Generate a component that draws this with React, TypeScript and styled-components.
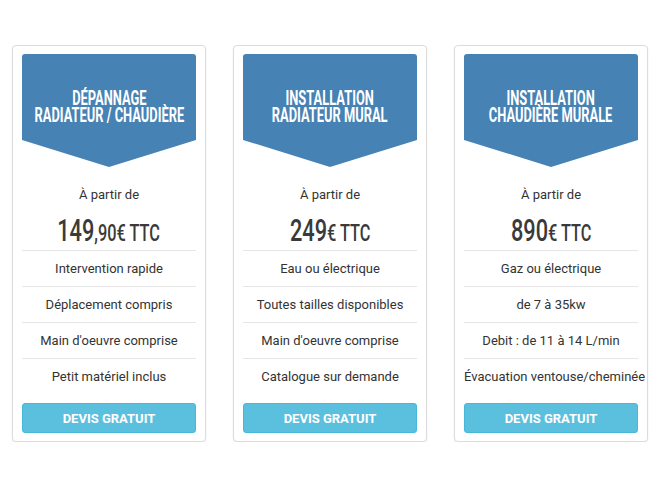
import React from "react";
import styled, { createGlobalStyle } from "styled-components";

const Global = createGlobalStyle`
  html, body { margin: 0; padding: 0; background: #fff; }
  body { font-family: Roboto, "Liberation Sans", Arial, sans-serif; }
`;

const Row = styled.div`
  display: flex;
  gap: 27px;
  padding: 45px 11px 0 12px;
  align-items: flex-start;
`;

const Card = styled.div`
  width: 194px;
  box-sizing: border-box;
  border: 1px solid #dcdcdc;
  border-radius: 4px;
  box-shadow: 0 1px 2px rgba(0, 0, 0, 0.08);
  padding: 8px 9px 8px 9px;
  display: flex;
  flex-direction: column;
  text-align: center;
  background: #fff;
`;

const Banner = styled.div`
  height: 113px;
  box-sizing: border-box;
  background: #4682b4;
  border-radius: 3px 3px 0 0;
  clip-path: polygon(0 0, 100% 0, 100% 76%, 50% 100%, 0 76%);
  padding-top: 36px;
  display: flex;
  flex-direction: column;
  align-items: center;
`;

const Title = styled.div`
  font-family: Roboto, "Liberation Sans", sans-serif;
  font-weight: 700;
  font-size: 19.5px;
  line-height: 17px;
  color: #fff;
  text-transform: uppercase;
  white-space: nowrap;
  text-align: center;
  transform: scaleX(0.66);
`;

const From = styled.div`
  margin-top: 18px;
  font-size: 13px;
  line-height: 20px;
  color: #333;
`;

const Price = styled.div`
  margin-top: 7px;
  height: 36px;
  line-height: 36px;
  padding-bottom: 2px;
  display: flex;
  justify-content: center;
`;

const PriceText = styled.div`
  font-family: Roboto, "Liberation Sans", sans-serif;
  font-weight: 500;
  color: #3a3a3a;
  font-size: 24px;
  white-space: nowrap;
  transform: scaleX(0.68);
`;

const Big = styled.span`
  font-size: 32px;
`;

const List = styled.ul`
  list-style: none;
  margin: 0;
  padding: 0;
`;

const Item = styled.li`
  height: 35px;
  line-height: 36px;
  border-top: 1px solid #e6e6e6;
  font-size: 13px;
  color: #333;
  white-space: nowrap;
`;

const Button = styled.button`
  margin-top: 9px;
  height: 30px;
  width: 100%;
  box-sizing: border-box;
  background: #5bc0de;
  border: 1px solid #46b8da;
  border-radius: 3px;
  color: #fff;
  font-family: Roboto, "Liberation Sans", sans-serif;
  font-weight: 700;
  font-size: 13px;
  cursor: pointer;
`;

type Plan = {
  title: [string, string];
  big: string;
  small: string;
  items: string[];
};

const plans: Plan[] = [
  {
    title: ["Dépannage", "radiateur / chaudière"],
    big: "149",
    small: ",90€ TTC",
    items: ["Intervention rapide", "Déplacement compris", "Main d'oeuvre comprise", "Petit matériel inclus"],
  },
  {
    title: ["Installation", "radiateur mural"],
    big: "249",
    small: "€ TTC",
    items: ["Eau ou électrique", "Toutes tailles disponibles", "Main d'oeuvre comprise", "Catalogue sur demande"],
  },
  {
    title: ["Installation", "chaudière murale"],
    big: "890",
    small: "€ TTC",
    items: ["Gaz ou électrique", "de 7 à 35kw", "Debit : de 11 à 14 L/min", "Évacuation ventouse/cheminée"],
  },
];

export default function App() {
  return (
    <>
      <Global />
      <Row>
        {plans.map((p, i) => (
          <Card key={i}>
            <Banner>
              <Title>
                {p.title[0]}
                <br />
                {p.title[1]}
              </Title>
            </Banner>
            <From>À partir de</From>
            <Price>
              <PriceText>
                <Big>{p.big}</Big>
                {p.small}
              </PriceText>
            </Price>
            <List>
              {p.items.map((it) => (
                <Item key={it}>{it}</Item>
              ))}
            </List>
            <Button>DEVIS GRATUIT</Button>
          </Card>
        ))}
      </Row>
    </>
  );
}
